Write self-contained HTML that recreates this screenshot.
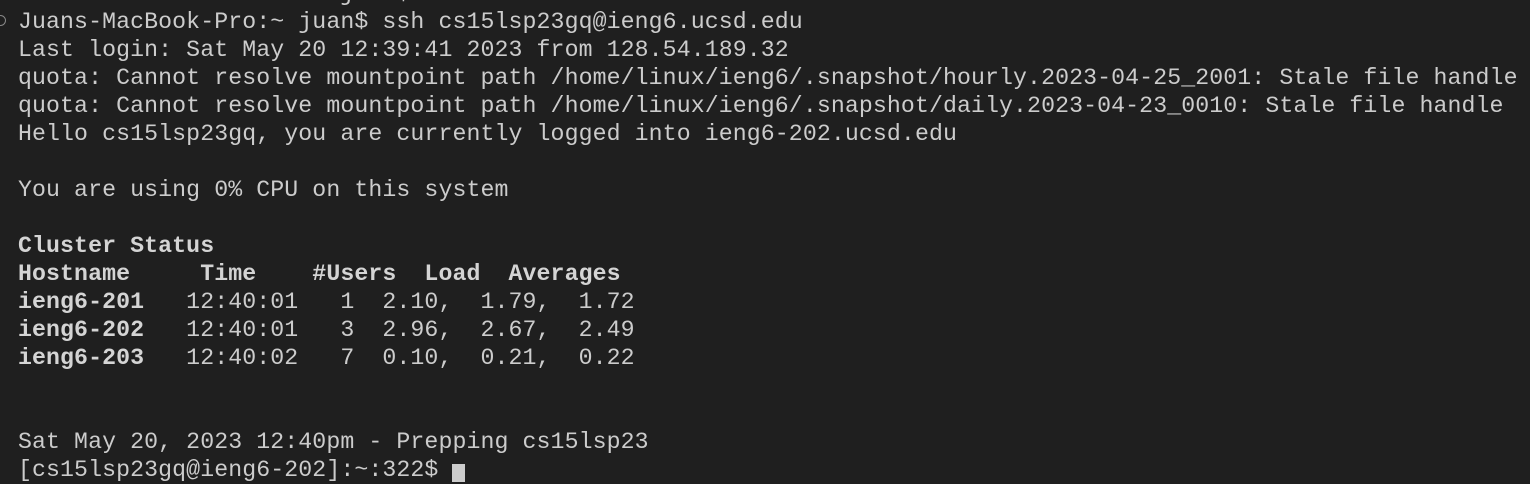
<!DOCTYPE html>
<html><head><style>
html,body{margin:0;padding:0;background:#1f1f1f;width:1530px;height:472px;overflow:hidden}
pre{position:absolute;left:18px;top:-20px;margin:0;font-family:"Liberation Mono","DejaVu Sans Mono",monospace;font-size:23.2px;letter-spacing:0.1px;line-height:28px;color:#cccccc;white-space:pre}
b{font-weight:bold;color:#d4d4d4}
.cur{display:inline-block;width:13px;height:18px;background:#cccccc;vertical-align:-6px}
.dot{position:absolute;left:-5px;top:15px;width:9px;height:9px;border:1.5px solid #888;border-radius:50%}
</style></head><body>
<div class="dot"></div>
<pre>Juans-MacBook-Pro:lab7 juan$ cd
Juans-MacBook-Pro:~ juan$ ssh cs15lsp23gq@ieng6.ucsd.edu
Last login: Sat May 20 12:39:41 2023 from 128.54.189.32
quota: Cannot resolve mountpoint path /home/linux/ieng6/.snapshot/hourly.2023-04-25_2001: Stale file handle
quota: Cannot resolve mountpoint path /home/linux/ieng6/.snapshot/daily.2023-04-23_0010: Stale file handle
Hello cs15lsp23gq, you are currently logged into ieng6-202.ucsd.edu

You are using 0% CPU on this system

<b>Cluster Status</b>
<b>Hostname     Time    #Users  Load  Averages</b>
<b>ieng6-201</b>   12:40:01   1  2.10,  1.79,  1.72
<b>ieng6-202</b>   12:40:01   3  2.96,  2.67,  2.49
<b>ieng6-203</b>   12:40:02   7  0.10,  0.21,  0.22


Sat May 20, 2023 12:40pm - Prepping cs15lsp23
[cs15lsp23gq@ieng6-202]:~:322$ <span class="cur"></span></pre>
</body></html>
